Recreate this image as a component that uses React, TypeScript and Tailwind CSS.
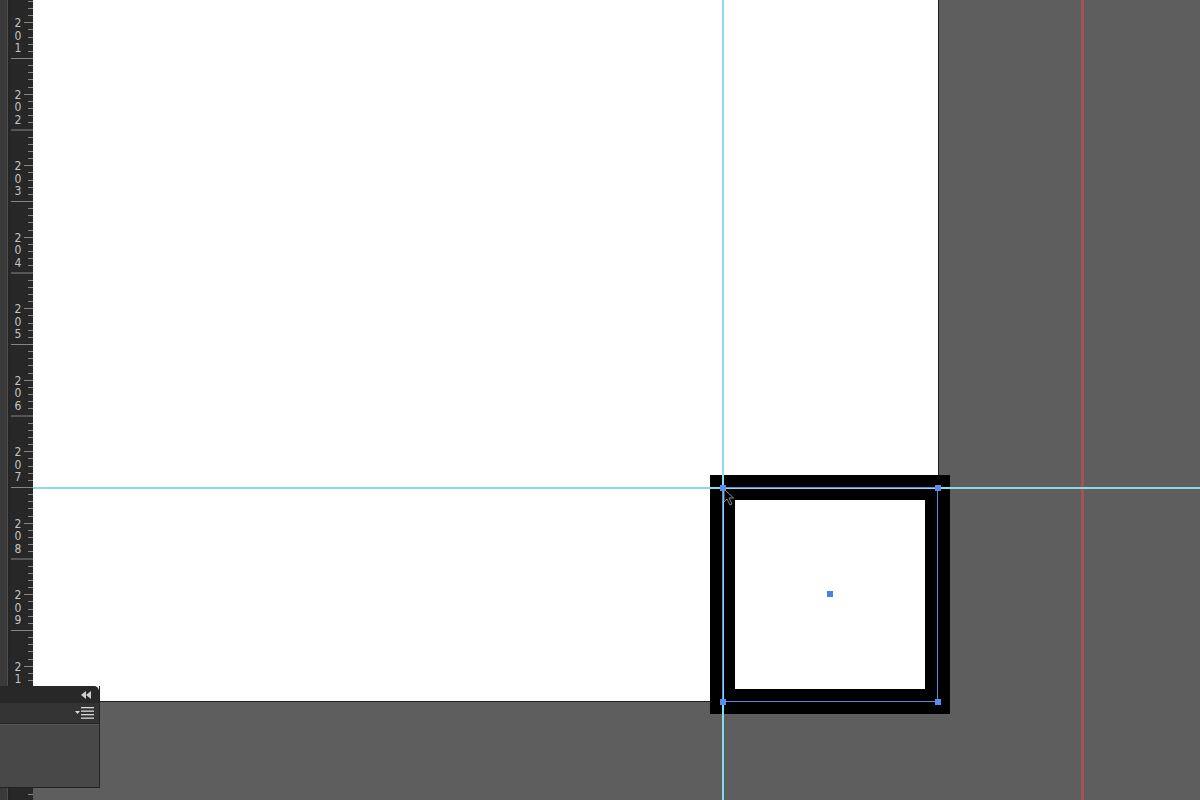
import React from "react";

const TICK0 = 58;
const STEP = 71.5;

function Ruler() {
  const majors: number[] = [];
  for (let k = -1; k <= 11; k++) majors.push(k);
  const ticks: React.ReactNode[] = [];
  majors.forEach((k) => {
    const y = TICK0 + STEP * k;
    ticks.push(<line key={`M${k}`} x1={1} x2={23} y1={y + 0.5} y2={y + 0.5} stroke="#858585" strokeWidth={1} />);
    for (let i = 1; i < 10; i++) {
      const ty = Math.round(y + (STEP / 10) * i) + 0.5;
      const len = i === 5 ? 9 : 5;
      ticks.push(<line key={`m${k}-${i}`} x1={23 - len} x2={23} y1={ty} y2={ty} stroke="#858585" strokeWidth={1} />);
    }
  });
  return (
    <div className="relative w-[23px] h-full bg-[#272727]">
      <svg className="absolute left-0 top-0" width={23} height={800}>
        {ticks}
      </svg>
      {majors
        .filter((k) => k >= 0 && k <= 9)
        .map((k) => {
          const y = TICK0 + STEP * k;
          const label = String(201 + k);
          return (
            <div
              key={`L${k}`}
              className="absolute left-[3px] flex flex-col items-center w-[10px] text-[12px] leading-[12.5px] text-[#c4c4c4]"
              style={{ top: y - 41, fontFamily: '"DejaVu Sans Condensed", "DejaVu Sans", sans-serif' }}
            >
              {label.split("").map((d, i) => (
                <span key={i} className="block h-[12.5px]">{d}</span>
              ))}
            </div>
          );
        })}
    </div>
  );
}

function Panel() {
  return (
    <div className="absolute left-0 top-[686px] w-[100px] h-[102px] flex flex-col border-r border-b border-[#222] z-20">
      <div className="h-[17px] bg-[#282828] rounded-tr-[5px] flex items-center justify-end pr-[7px]">
        <svg width="11" height="8" viewBox="0 0 11 8">
          <polygon points="5,0 5,8 0,4" fill="#cfcfcf" />
          <polygon points="10,0 10,8 5,4" fill="#cfcfcf" />
        </svg>
      </div>
      <div className="h-[21px] bg-[#333333] flex items-center justify-end pr-[5px] border-b border-[#262626]">
        <svg width="19" height="12" viewBox="0 0 19 12">
          <polygon points="0,4 5,4 2.5,7" fill="#d8d8d8" />
          <rect x="6" y="0" width="13" height="1.3" fill="#d8d8d8" />
          <rect x="6" y="3.5" width="13" height="1.3" fill="#d8d8d8" />
          <rect x="6" y="7" width="13" height="1.3" fill="#d8d8d8" />
          <rect x="6" y="10.5" width="13" height="1.3" fill="#d8d8d8" />
        </svg>
      </div>
      <div className="flex-1 bg-[#484848] border-t border-[#575757]" />
    </div>
  );
}

function Canvas() {
  const ox = 33;
  const fx = 722 - ox;
  const fy = 487;
  const fw = 215;
  const fh = 214;
  return (
    <div className="relative flex-1 h-full bg-[#5e5e5e] overflow-hidden">
      {/* page */}
      <div className="w-[906px] h-[702px] bg-white border-r border-b border-[#1e1e1e]" />
      {/* bleed line */}
      <div className="absolute top-0 bottom-0 left-[1048px] w-[3px] bg-[#a65252]" />
      {/* frame */}
      <div
        className="absolute border-[25px] border-black bg-white"
        style={{ left: fx - 12.5, top: fy - 12.5, width: fw + 25, height: fh + 25 }}
      />
      {/* guides */}
      <div className="absolute left-0 right-0 top-[486.5px] h-[2px] bg-[#86dce8]" />
      <div className="absolute top-0 bottom-0 left-[688.5px] w-[2px] bg-[#86dce8]" />
      {/* selection */}
      <div
        className="absolute border border-[#6389e6]"
        style={{ left: fx, top: fy, width: fw + 1, height: fh + 1 }}
      />
      {[
        [fx, fy],
        [fx + fw, fy],
        [fx, fy + fh],
        [fx + fw, fy + fh],
      ].map(([x, y], i) => (
        <div key={i} className="absolute w-[6px] h-[6px] bg-[#5b8cf0]" style={{ left: x - 2.5, top: y - 2.5 }} />
      ))}
      <div className="absolute w-[6px] h-[6px] bg-[#4f7fe6]" style={{ left: 829 - ox - 2.5, top: 593 - 2.5 }} />
      {/* cursor */}
      <svg className="absolute" style={{ left: 722 - ox + 1, top: 488 }} width="14" height="20" viewBox="0 0 14 20">
        <path d="M1 1 L1 14 L4 11 L7 17 L9 16 L6 10 L10.5 10 Z" fill="none" stroke="#8a8a8a" strokeWidth="1" />
      </svg>
    </div>
  );
}

export default function App() {
  return (
    <div className="w-[1200px] h-[800px] overflow-hidden flex relative bg-[#5e5e5e]">
      <div className="flex h-full w-[33px] shrink-0">
        <div className="w-[7px] h-full bg-[#3a3a3a]" />
        <div className="w-px h-full bg-[#4e4e4e]" />
        <div className="w-[2px] h-full bg-[#242424]" />
        <Ruler />
      </div>
      <Canvas />
      <Panel />
    </div>
  );
}
